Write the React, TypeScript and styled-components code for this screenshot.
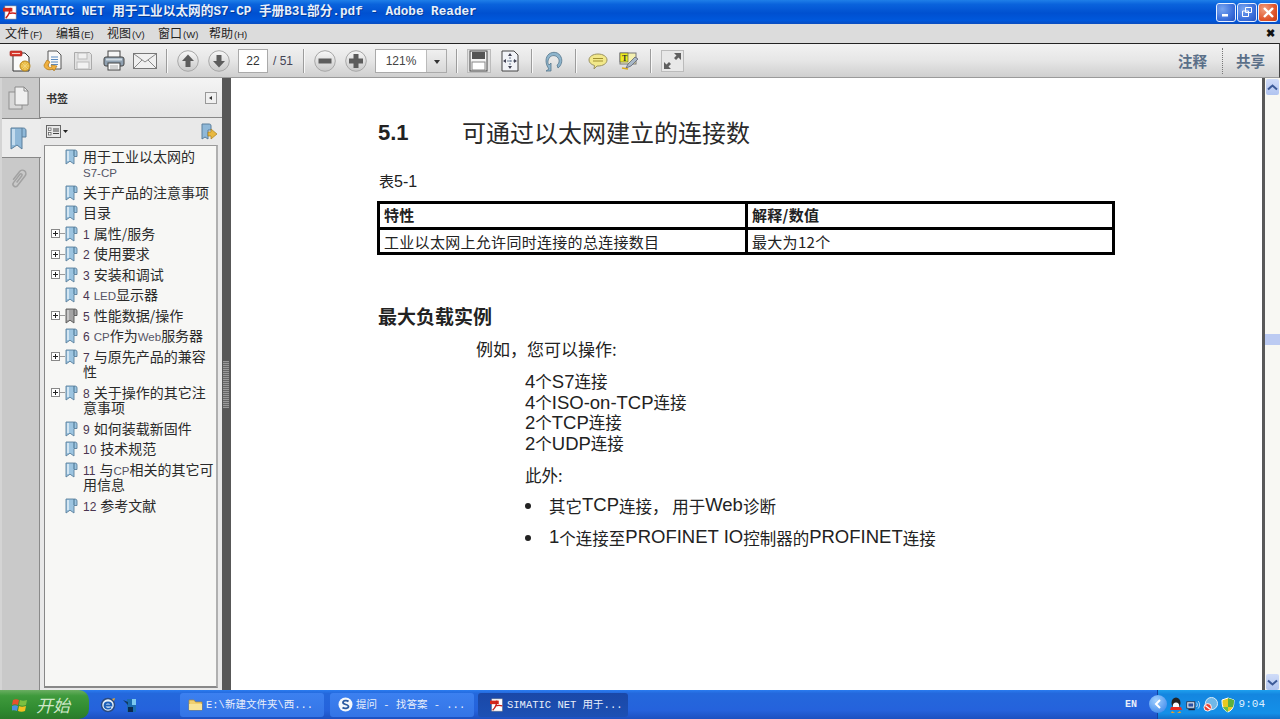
import React from "react";
import styled, { createGlobalStyle } from "styled-components";

const CJK = `"Noto Sans CJK SC", "Liberation Sans", sans-serif`;
const LAT = `"Liberation Sans", "Noto Sans CJK SC", sans-serif`;
const MONO = `"Liberation Mono", "Noto Sans CJK SC", monospace`;

const Global = createGlobalStyle`
  html, body { margin: 0; padding: 0; background: #fff; overflow: hidden; }
  * { box-sizing: border-box; }
`;

const Win = styled.div`
  width: 1280px; height: 719px; display: flex; flex-direction: column; overflow: hidden;
  font-family: ${CJK}; color: #222;
`;

/* ---------- title bar ---------- */
const TitleBar = styled.div`
  height: 24px; flex: none; display: flex; align-items: center; padding: 0 2px 0 3px;
  background: linear-gradient(180deg, #1f7fe8 0%, #0a63dc 18%, #0050d0 55%, #0058dc 85%, #0a4cc0 100%);
`;
const TitleText = styled.div`
  margin-left: 3px; color: #e8f0fa; font: 700 12.66px/24px ${MONO}; white-space: pre; flex: 1;
  text-shadow: 1px 1px 0 #003a9a;
`;
const WinBtn = styled.div<{ $c: "b" | "r" }>`
  width: 20px; height: 19px; margin-left: 1px; border: 1px solid #e8f0ff; border-radius: 3px;
  display: flex; align-items: center; justify-content: center;
  background: ${(p) =>
    p.$c === "r"
      ? "radial-gradient(circle at 30% 30%, #f0a080, #e0562c 60%, #c83c14)"
      : "radial-gradient(circle at 30% 30%, #7aa6f0, #3c70dc 60%, #2452c0)"};
`;

/* ---------- menu ---------- */
const MenuBar = styled.div`
  height: 19px; flex: none; display: flex; align-items: center; padding: 0 4px 0 5px; background: #dcdcdc;
`;
const MenuItem = styled.div`
  width: 51px; font: 400 12px/19px ${CJK}; color: #222; white-space: pre;
  & > i { font: 400 9.5px/19px ${LAT}; font-style: normal; margin-left: 1px; }
`;
const MenuClose = styled.div`
  margin-left: auto; font: 700 11px/19px ${LAT}; color: #111; margin-right: 1px;
`;

/* ---------- toolbar ---------- */
const ToolBar = styled.div`
  height: 35px; flex: none; display: flex; align-items: center; padding: 1px 13px 0 5px;
  border-top: 1px solid #222; border-right: 1px solid #444; border-bottom: 1px solid #9a9a9a;
  background: linear-gradient(180deg, #f2f2f2 0%, #e6e6e6 50%, #cfcfcf 100%);
`;
const ToolBtn = styled.div`
  width: 31px; height: 26px; flex: none; display: flex; align-items: center; justify-content: center;
`;
const Sep = styled.div<{ $l: number; $r: number }>`
  width: 1px; height: 24px; flex: none; background: #9c9c9c; box-shadow: 1px 0 0 #f8f8f8;
  margin: 0 ${(p) => p.$r}px 0 ${(p) => p.$l}px;
`;
const PageInput = styled.div`
  width: 30px; height: 24px; margin-left: 4px; flex: none; background: #fff; border: 1px solid #aaa;
  font: 400 12px/22px ${LAT}; text-align: center; color: #333;
`;
const PageTotal = styled.div`
  width: 22px; margin-left: 5px; flex: none; font: 400 12px/24px ${LAT}; color: #445; white-space: pre;
`;
const Combo = styled.div`
  width: 72px; height: 24px; margin-left: 4px; flex: none; display: flex; background: #fff; border: 1px solid #aaa;
`;
const ComboVal = styled.div`
  flex: 1; font: 400 12px/22px ${LAT}; text-align: center; color: #444;
`;
const ComboArrow = styled.div`
  width: 20px; background: linear-gradient(180deg, #f0f0f0, #d8d8d8); border-left: 1px solid #bbb;
  display: flex; align-items: center; justify-content: center;
  &::after { content: ""; border: 3px solid transparent; border-top: 4px solid #333; margin-top: 4px; }
`;
const RightLabel = styled.div`
  width: 30px; flex: none; font: 700 14.5px/34px ${CJK}; color: #5a6f88; white-space: nowrap;
`;
const DotSep = styled.div`
  height: 26px; width: 1px; flex: none; margin: 0 13px 0 14px; border-left: 1px dotted #777;
`;
const Spacer = styled.div` flex: 1; `;

/* ---------- body ---------- */
const Body = styled.div` flex: 1; min-height: 0; display: flex; `;
const Tabs = styled.div`
  width: 40px; flex: none; display: flex; flex-direction: column; background: #c9c9c9;
  border-right: 1px solid #8a8a8a; border-left: 2px solid #d4d4d4;
`;
const Tab = styled.div<{ $active?: boolean }>`
  height: 40px; width: ${(p) => (p.$active ? "39px" : "37px")}; display: flex; align-items: center; justify-content: center;
  padding-right: ${(p) => (p.$active ? "7px" : "3px")};
  position: relative;
  ${(p) => p.$active && "background:#ececec; border-top:1px solid #888; border-bottom:1px solid #888; z-index:1;"}
`;
const Panel = styled.div`
  width: 182px; flex: none; display: flex; flex-direction: column; background: #e9e9e9;
`;
const PanelHead = styled.div`
  height: 40px; flex: none; display: flex; align-items: center; justify-content: space-between; padding: 0 5px 0 6px;
  background: linear-gradient(180deg, #f4f4f4, #e4e4e4); border-bottom: 1px solid #888;
`;
const PanelTitle = styled.div` font: 700 11px/14px ${CJK}; color: #333; `;
const Collapse = styled.div`
  width: 12px; height: 12px; border: 1px solid #999; background: #f0f0f0;
  display: flex; align-items: center; justify-content: center;
  &::after { content: ""; border: 2px solid transparent; border-right: 3px solid #333; margin-left: -3px; }
`;
const PanelTools = styled.div`
  height: 27px; flex: none; display: flex; align-items: center; justify-content: space-between; padding: 0 4px 0 6px;
`;
const OptionsWrap = styled.div` display: flex; align-items: center; gap: 2px; `;
const Tree = styled.div`
  flex: 1; margin: 0 4px 2px 4px; border: 1px solid #9a9a9a; border-left-color: #888; background: #f7f7f5;
  border-bottom: 2px solid #888; border-right: 2px solid #b0b0b0;
`;
const Row = styled.div`
  position: relative; display: flex; padding: 2.5px 0 2.5px 20px; font: 400 14px/15.5px ${CJK}; color: #2a2a2a;
`;
const Mark = styled.div`
  width: 13px; height: 15px; flex: none; margin-right: 5px;
`;
const RowText = styled.div` flex: 1; min-width: 0; `;
const Num = styled.span`
  font: 400 12px/1 ${LAT}; color: #4a3550; margin-right: 4px;
`;
const Lat = styled.span` font: 400 11.5px/1 ${LAT}; color: #556; `;
const Expander = styled.div`
  position: absolute; left: 6px; top: 6px; width: 9px; height: 9px; border: 1px solid #888; background: #fff;
  &::before { content: ""; position: absolute; left: 1px; top: 3px; width: 5px; height: 1px; background: #222; }
  &::after { content: ""; position: absolute; left: 3px; top: 1px; width: 1px; height: 5px; background: #222; }
`;
const Dash = styled.div`
  position: absolute; left: 8px; top: 3px; width: 5px; height: 1px; background: #999;
`;
const Splitter = styled.div`
  width: 9px; flex: none; background: #585858; display: flex; align-items: center;
`;
const Grip = styled.div`
  width: 6px; height: 47px; margin-left: 1px;
  background: repeating-linear-gradient(0deg, #9a9a9a 0 1px, #666 1px 2px);
`;

/* ---------- page ---------- */
const Page = styled.div`
  flex: 1; background: #fff; padding: 39px 147px 0 147px; min-width: 0; color: #222;
`;
const H1 = styled.div` display: flex; height: 32px; align-items: center; `;
const H1Num = styled.div` width: 84px; font: 700 22px/32px ${LAT}; color: #222; `;
const H1Text = styled.div` font: 400 24px/32px ${CJK}; color: #2a2a2a; padding-bottom: 3px; `;
const Caption = styled.div`
  margin: 21px 0 0 1px; height: 22px; font: 400 15px/22px ${CJK};
`;
const CapNum = styled.span` font: 400 16px/20px ${LAT}; color: #222; `;
const PTable = styled.div`
  margin: 9px 0 0 -1px; width: 738px; border: 3px solid #000; display: grid; grid-template-columns: 368px 1fr;
`;
const Cell = styled.div<{ $h?: boolean; $last?: boolean }>`
  padding-left: 4px; white-space: pre;
  font: ${(p) => (p.$h ? 700 : 400)} 15px/${(p) => (p.$h ? 22 : 24)}px ${CJK}; letter-spacing: 0.3px; color: #222;
  height: ${(p) => (p.$h ? 26 : 22)}px;
  ${(p) => p.$h && "border-bottom: 3px solid #000;"}
  ${(p) => !p.$last && "border-right: 3px solid #000;"}
`;
const H2 = styled.div` margin-top: 47px; font: 700 19px/28px ${CJK}; color: #222; `;
const Intro = styled.div` margin: 6px 0 0 98px; font: 400 17px/26px ${CJK}; white-space: pre; `;
const Block = styled.div` margin: 9px 0 0 147px; `;
const Line = styled.div` font: 400 16.5px/20.6px ${CJK}; height: 20.6px; white-space: pre; `;
const L = styled.span` font: 400 18.5px/20px ${LAT}; color: #222; `;
const After = styled.div` margin: 11px 0 0 147px; font: 400 16.5px/22px ${CJK}; `;
const Bullet = styled.div<{ $top: number }>`
  margin: ${(p) => p.$top}px 0 0 147px; display: flex; font: 400 16.5px/22px ${CJK}; white-space: pre;
  &::before { content: ""; width: 6px; height: 6px; border-radius: 50%; background: #222; margin: 8px 18px 0 0; flex: none; }
`;

const ScrollBar = styled.div`
  width: 18px; flex: none; display: flex; flex-direction: column; background: #f8f8f3; border-left: 3px solid #585858;
`;
const ScrollBtn = styled.div`
  height: 16px; margin: 1px 1px 0 1px; background: linear-gradient(180deg, #d0dcf8, #b0c4f0); border-radius: 2px;
  display: flex; align-items: center; justify-content: center; flex: none;
`;
const Thumb = styled.div`
  height: 11px; margin: 239px 0 0 0; background: #bccbf2; flex: none;
`;

/* ---------- taskbar ---------- */
const TaskBar = styled.div`
  height: 29px; flex: none; display: flex; align-items: center;
  background: linear-gradient(180deg, #2a7cf0 0%, #2468dc 12%, #2562dc 70%, #1c50c0 100%);
`;
const Start = styled.div`
  width: 89px; height: 29px; flex: none; display: flex; align-items: center; padding-left: 12px; gap: 8px;
  border-radius: 0 10px 10px 0; background: linear-gradient(180deg, #6aae62 0%, #3f9a3c 20%, #2f8a30 70%, #2a7a2a 100%);
  font: italic 400 17px/29px ${CJK}; color: #cfe8c8;
`;
const Quick = styled.div` width: 91px; flex: none; display: flex; padding-left: 11px; gap: 7px; align-items: center; `;
const TaskBtn = styled.div<{ $w: number; $active?: boolean; $ml: number }>`
  width: ${(p) => p.$w}px; height: 24px; flex: none; margin-left: ${(p) => p.$ml}px; border-radius: 3px; display: flex; align-items: center;
  padding-left: ${(p) => (p.$active ? 12 : 8)}px; gap: 3px; color: #e8eefa; white-space: pre; overflow: hidden;
  font: 400 10.5px/24px ${MONO};
  background: ${(p) => (p.$active ? "linear-gradient(180deg,#1a48a8,#1c50b4)" : "linear-gradient(180deg,#3c80f0,#3474e6)")};
`;
const Tray = styled.div`
  width: 123px; height: 29px; flex: none; display: flex; align-items: center; position: relative; padding-left: 11px;
  border-left: 1px solid #1440a0; background: linear-gradient(180deg, #1fa0ee, #1486e0 15%, #1490e8 80%, #1270c8);
`;
const TrayIcon = styled.div<{ $ml: number }>`
  margin-left: ${(p) => p.$ml}px; flex: none; display: flex;
`;
const Lang = styled.div` margin-left: auto; margin-right: 20px; font: 700 10px/29px ${MONO}; color: #e8eefa; `;
const Chevron = styled.div`
  position: absolute; left: -9px; top: 5px; width: 18px; height: 18px; border-radius: 50%;
  background: radial-gradient(circle at 40% 30%, #a0d0ff, #2f7ee8); display: flex; align-items: center; justify-content: center;
`;
const Clock = styled.div` margin-left: auto; margin-right: 15px; font: 400 11px/29px ${MONO}; color: #dff0ff; `;

/* ---------- icons ---------- */
const PdfMark = ({ s = 15 }: { s?: number }) => (
  <svg width={s} height={s} viewBox="0 0 16 16">
    <rect x="2" y="1" width="12" height="14" fill="#fff" stroke="#888" strokeWidth=".6" />
    <rect x="0" y="3" width="10" height="4" fill="#d4281c" />
    <path d="M3 14c3-3 5-8 4.500-11M6 9c2-.5 5-1 8 0" stroke="#c8201c" strokeWidth="1.600" fill="none" />
  </svg>
);
const Create = () => (
  <svg width="24" height="24" viewBox="0 0 24 24">
    <path d="M4 4h12l4 4v14H4z" fill="#fafafa" stroke="#333" />
    <rect x="1" y="2" width="12" height="5" rx="1" fill="#d83a30" stroke="#a01c16" strokeWidth=".6" />
    <rect x="3" y="4" width="8" height="1" fill="#f8d0c8" />
    <circle cx="16" cy="17" r="5" fill="#e8b840" stroke="#b88820" />
    <path d="M16 13v8M12 17h8M13 14l6 6M19 14l-6 6" stroke="#f4d880" strokeWidth=".8" />
  </svg>
);
const Open = () => (
  <svg width="24" height="24" viewBox="0 0 24 24">
    <path d="M8 2h9l4 4v14H8z" fill="#f8f8f8" stroke="#555" />
    <path d="M11 8h7M11 10.500h7M11 13h7M11 15.500h7" stroke="#5a8ac0" />
    <path d="M4 16c0 4 5 6 9 4l1 2 3-5-6-1 1 2c-2 1-4 0-4-2l2-3-3-2-3 5z" fill="#f0b040" stroke="#b07818" strokeWidth=".7" />
  </svg>
);
const Save = () => (
  <svg width="20" height="20" viewBox="0 0 20 20">
    <path d="M1.500 1.500h15l2 2v15h-17z" fill="#e2e2e2" stroke="#aaa" />
    <rect x="5" y="2" width="9" height="6" fill="#f0f0f0" stroke="#bbb" />
    <rect x="4" y="11" width="12" height="7" fill="#f2f2f2" stroke="#bbb" />
  </svg>
);
const Print = () => (
  <svg width="24" height="24" viewBox="0 0 24 24">
    <rect x="6" y="2" width="12" height="7" fill="#f6f6f6" stroke="#444" />
    <rect x="2" y="8" width="20" height="9" rx="2" fill="#8fa0b0" stroke="#444" />
    <rect x="4" y="9.500" width="16" height="2" fill="#d0dae2" />
    <rect x="6" y="14" width="12" height="7" fill="#fafafa" stroke="#444" />
    <path d="M8 17h8M8 19h8" stroke="#aaa" />
  </svg>
);
const Mail = () => (
  <svg width="24" height="18" viewBox="0 0 24 18">
    <rect x=".5" y="1.500" width="23" height="15" fill="#f0f0f0" stroke="#777" />
    <path d="M1 2l11 8 11-8M1 16l8-8M23 16l-8-8" fill="none" stroke="#888" />
  </svg>
);
const Circ = ({ d }: { d: string }) => (
  <svg width="22" height="22" viewBox="0 0 22 22">
    <defs>
      <linearGradient id="cg" x1="0" y1="0" x2="0" y2="1">
        <stop offset="0" stopColor="#f8f8f8" />
        <stop offset="1" stopColor="#c8c8c8" />
      </linearGradient>
    </defs>
    <circle cx="11" cy="11" r="10.300" fill="url(#cg)" stroke="#a8a8a8" />
    <path d={d} fill="#5c5c5c" />
  </svg>
);
const FitPage = () => (
  <svg width="24" height="24" viewBox="0 0 24 24">
    <rect x=".5" y=".5" width="23" height="23" fill="#e0e0e0" stroke="#bbb" />
    <rect x="3" y="2" width="17" height="20" fill="#f4f4f4" stroke="#444" />
    <rect x="5" y="3" width="13" height="7" fill="#555" />
    <rect x="5" y="13" width="13" height="8" fill="#fff" stroke="#888" />
  </svg>
);
const FitWide = () => (
  <svg width="18" height="22" viewBox="0 0 18 22">
    <path d="M1 1h12l4 4v16H1z" fill="#f2f4f8" stroke="#444" />
    <path d="M9 4v14M3 11h12" stroke="#6a7a90" strokeDasharray="2 1" />
    <path d="M9 3l-2 3h4zM9 19l-2-3h4zM2 11l3-2v4zM16 11l-3-2v4z" fill="#445" />
  </svg>
);
const Spin = () => (
  <svg width="20" height="22" viewBox="0 0 20 22">
    <path d="M5 19C1 14 1 7 5 4c4-3 10-2 12 3 2 4 0 9-3 11l-1-3c2-1 3-5 1-7-2-3-6-3-8-1-2 2-3 6-1 8l2-2v8H2z" fill="#8db4cc" stroke="#56768c" strokeWidth=".8" />
  </svg>
);
const Comment = () => (
  <svg width="20" height="20" viewBox="0 0 20 20">
    <path d="M10 3c5 0 9 2.500 9 6s-4 6-9 6l-1 0-3 3 .5-3.500C3 13.500 1 11.500 1 9c0-3.500 4-6 9-6z" fill="#f2e88a" stroke="#9a9260" />
    <path d="M5 7.500h10M5 10h10" stroke="#a09030" />
  </svg>
);
const Highlight = () => (
  <svg width="20" height="20" viewBox="0 0 20 20">
    <rect x="1" y="2" width="16" height="11" fill="#f4f0b0" stroke="#777" />
    <rect x="1" y="2" width="8" height="9" fill="#ecec20" stroke="#555" strokeWidth=".6" />
    <text x="3" y="9.500" fontSize="8" fontFamily="Liberation Serif" fontWeight="700" fill="#333">T</text>
    <path d="M7 17l2-4 7-7 3 2-7 7z" fill="#a8b8c8" stroke="#556" strokeWidth=".7" />
    <path d="M3 17l6 1" stroke="#d8a820" strokeWidth="1.500" />
  </svg>
);
const Expand = () => (
  <svg width="23" height="22" viewBox="0 0 23 22">
    <rect x=".5" y=".5" width="22" height="21" fill="#e8e8e8" stroke="#bbb" />
    <path d="M13 3h7v7l-2.500-2.500-2.500 2.500-2-2 2.500-2.500zM10 19H3v-7l2.500 2.500L8 12l2 2-2.500 2.500z" fill="#606060" />
  </svg>
);
const DocTab = () => (
  <svg width="22" height="24" viewBox="0 0 22 24">
    <rect x="1" y="6" width="13" height="17" fill="#d8d8d8" stroke="#909090" />
    <path d="M7 1h9l4 4v14H7z" fill="#f0f0f0" stroke="#8a8a8a" />
    <path d="M16 1v4h4" fill="none" stroke="#8a8a8a" />
  </svg>
);
const BookTab = () => (
  <svg width="19" height="24" viewBox="0 0 19 24">
    <path d="M2 2h11c2 0 4 0 4 3v6h-4v12l-5-4-6 4V4z" fill="#8fb8d8" stroke="#5a7f9c" />
    <path d="M13 2v9" stroke="#5a7f9c" />
    <rect x="3" y="3" width="3" height="16" fill="#c4dcee" />
  </svg>
);
const ClipTab = () => (
  <svg width="22" height="24" viewBox="0 0 22 24">
    <g transform="rotate(38 11 12)">
      <path d="M7.500 17V6.500a3.500 3.500 0 0 1 7 0V19a2.500 2.500 0 0 1-5 0V8.500a1.200 1.200 0 0 1 2.400 0V17" fill="none" stroke="#a2a2a2" strokeWidth="1.500" />
    </g>
  </svg>
);
const OptIcon = () => (
  <svg width="15" height="13" viewBox="0 0 15 13">
    <rect x=".5" y=".5" width="14" height="12" fill="#e8e8e8" stroke="#666" />
    <rect x="2.500" y="3" width="2.500" height="2.500" fill="#fff" stroke="#555" strokeWidth=".7" />
    <rect x="2.500" y="7.500" width="2.500" height="2.500" fill="#fff" stroke="#555" strokeWidth=".7" />
    <path d="M7 4h6M7 6h6M7 8.500h6" stroke="#444" />
  </svg>
);
const Caret = () => (
  <svg width="5" height="4" viewBox="0 0 5 4"><path d="M0 0h5L2.500 3z" fill="#222" /></svg>
);
const NewMark = () => (
  <svg width="17" height="17" viewBox="0 0 17 17">
    <path d="M1 1h6c2 0 3 0 3 2v4H7v9l-3-2-3 2z" fill="#8fb8d8" stroke="#5a7f9c" />
    <path d="M7 9h3V6l6 5-6 5v-3H7z" fill="#e8b840" stroke="#a87f20" strokeWidth=".7" />
  </svg>
);
const BookMark = ({ gray }: { gray?: boolean }) => (
  <svg width="13" height="16" viewBox="0 0 13 16">
    <path d="M1 1h7.500c2 0 3.500 0 3.500 2v4.500H9V15l-4-2.800L1 15z" fill={gray ? "#a4a4a4" : "#9cc4e0"} stroke={gray ? "#555" : "#5a7f9c"} strokeWidth=".9" />
    <path d="M9 1v6" stroke={gray ? "#555" : "#44708c"} />
    <rect x="2" y="2" width="2" height="10" fill={gray ? "#c8c8c8" : "#d4e6f2"} />
  </svg>
);
const Chev = ({ down }: { down?: boolean }) => (
  <svg width="11" height="7" viewBox="0 0 11 7">
    <path d={down ? "M1 1.500l4.500 4 4.500-4" : "M1 5.500l4.500-4 4.500 4"} fill="none" stroke="#3c5a98" strokeWidth="2" />
  </svg>
);
const XpFlag = () => (
  <svg width="16" height="16" viewBox="0 0 16 16">
    <path d="M1 3c2-1 4-1 6 0l-1 5c-2-1-4-1-6 0z" fill="#e8502c" />
    <path d="M8 3c2 1 4 1 7 0l-1 5c-2 1-5 1-7 0z" fill="#7cc040" />
    <path d="M0 9c2-1 4-1 6 0l-1 5c-2-1-4-1-6 0z" fill="#4a90e0" />
    <path d="M7 9c2 1 4 1 7 0l-1 5c-2 1-5 1-7 0z" fill="#f4c020" />
  </svg>
);
const IE = () => (
  <svg width="16" height="16" viewBox="0 0 16 16">
    <circle cx="8" cy="8" r="6.500" fill="#e8f2fa" stroke="#2a4a80" strokeWidth="1.500" />
    <path d="M4.500 8.500h7c0-4-7-4-7 0 0 3.500 5 4 6.500 2" fill="none" stroke="#1c60b8" strokeWidth="1.800" />
    <path d="M12 2l3-1-1 3z" fill="#e8a830" />
  </svg>
);
const Desk = () => (
  <svg width="16" height="16" viewBox="0 0 16 16">
    <path d="M4 2h9v13H4z" fill="#1c6cb0" />
    <path d="M9 2h4v6H9z" fill="#7cc8f0" />
    <path d="M0 3l5 2v3z" fill="#103a60" />
    <rect x="5" y="10" width="5" height="5" fill="#0a2a50" />
  </svg>
);
const Folder = () => (
  <svg width="15" height="13" viewBox="0 0 15 13">
    <path d="M1 2h5l1.500 2H14v8H1z" fill="#f0d070" stroke="#b08a30" strokeWidth=".7" />
    <path d="M1 6h13v6H1z" fill="#f8e498" />
  </svg>
);
const Sogou = () => (
  <svg width="15" height="15" viewBox="0 0 15 15">
    <circle cx="7.500" cy="7.500" r="7" fill="#f4f8fc" />
    <path d="M10.500 4.500C9 3 5 3.500 5 5.500 5 8 10.500 7 10.500 9.500c0 2-4 2.500-6 1" fill="none" stroke="#2a5aa0" strokeWidth="1.800" />
  </svg>
);
const QQ = () => (
  <svg width="14" height="16" viewBox="0 0 14 16">
    <ellipse cx="7" cy="6" rx="4.500" ry="5.500" fill="#222" />
    <ellipse cx="7" cy="9" rx="3.200" ry="3.500" fill="#fafafa" />
    <path d="M2 10h10l1 3H1z" fill="#e82c20" />
    <path d="M3 14l3 2H2zM11 14l-3 2h4z" fill="#f0a020" />
  </svg>
);
const Net = () => (
  <svg width="16" height="14" viewBox="0 0 20 14">
    <rect x="1" y="3" width="10" height="8" fill="#dfeaf8" stroke="#223" />
    <rect x="3" y="5" width="6" height="4" fill="#2a50a0" />
    <rect x="3" y="12" width="8" height="1.500" fill="#223" />
    <path d="M13 4c1.500 1.500 1.500 4 0 5.500M15 2c2.500 2.500 2.500 7 0 9.500" fill="none" stroke="#e8f0fa" />
  </svg>
);
const Globe = () => (
  <svg width="15" height="15" viewBox="0 0 16 16">
    <circle cx="9" cy="7" r="6.500" fill="#70b8e8" stroke="#e4f0f8" />
    <circle cx="5" cy="11" r="4" fill="#e84030" stroke="#fff" />
    <path d="M2.500 9l5 4" stroke="#fff" strokeWidth="1.400" />
  </svg>
);
const Shield = () => (
  <svg width="14" height="16" viewBox="0 0 14 16">
    <path d="M7 1l6 2c0 6-1 10-6 12C2 13 1 9 1 3z" fill="#e8c820" stroke="#fff" />
    <path d="M7 1l6 2c0 3-.3 5-1 7H7z" fill="#5cb040" />
    <path d="M7 10h-5c1 2.500 3 4 5 5z" fill="#6cbe48" />
  </svg>
);

const UP = "M11 4.500L5 11h3.500v6h5v-6H17z";
const DOWN = "M11 17.500L5 11h3.500V5h5v6H17z";
const MINUS = "M4.500 8.500h13v5h-13z";
const PLUS = "M8.500 4h5v4.500H18v5h-4.500V18h-5v-4.500H4v-5h4.500z";

const menus: [string, string][] = [["文件", "(F)"], ["编辑", "(E)"], ["视图", "(V)"], ["窗口", "(W)"], ["帮助", "(H)"]];

type Item = { n?: string; t: React.ReactNode; exp?: boolean; gray?: boolean };
const items: Item[] = [
  { t: <>用于工业以太网的<br /><Lat>S7-CP</Lat></> },
  { t: "关于产品的注意事项" },
  { t: "目录" },
  { n: "1", t: "属性/服务", exp: true },
  { n: "2", t: "使用要求", exp: true },
  { n: "3", t: "安装和调试", exp: true },
  { n: "4", t: <><Lat>LED</Lat>显示器</> },
  { n: "5", t: "性能数据/操作", exp: true, gray: true },
  { n: "6", t: <><Lat>CP</Lat>作为<Lat>Web</Lat>服务器</> },
  { n: "7", t: "与原先产品的兼容性", exp: true },
  { n: "8", t: "关于操作的其它注意事项", exp: true },
  { n: "9", t: "如何装载新固件" },
  { n: "10", t: "技术规范" },
  { n: "11", t: <>与<Lat>CP</Lat>相关的其它可用信息</> },
  { n: "12", t: "参考文献" },
];

export default function App() {
  return (
    <Win>
      <Global />
      <TitleBar>
        <PdfMark />
        <TitleText>SIMATIC NET 用于工业以太网的S7-CP 手册B3L部分.pdf - Adobe Reader</TitleText>
        <WinBtn $c="b">
          <svg width="12" height="12" viewBox="0 0 12 12"><rect x="2" y="8" width="6" height="2.500" fill="#fff" /></svg>
        </WinBtn>
        <WinBtn $c="b">
          <svg width="12" height="12" viewBox="0 0 12 12"><path d="M4.500 1.500h6v5h-6zM1.500 5h6v5.500h-6z" fill="none" stroke="#fff" /></svg>
        </WinBtn>
        <WinBtn $c="r">
          <svg width="13" height="13" viewBox="0 0 13 13"><path d="M2 2l9 9M11 2l-9 9" stroke="#fff" strokeWidth="2.400" /></svg>
        </WinBtn>
      </TitleBar>
      <MenuBar>
        {menus.map(([a, b]) => (
          <MenuItem key={a}>{a}<i>{b}</i></MenuItem>
        ))}
        <MenuClose>✖</MenuClose>
      </MenuBar>
      <ToolBar>
        <ToolBtn><Create /></ToolBtn>
        <ToolBtn><Open /></ToolBtn>
        <ToolBtn><Save /></ToolBtn>
        <ToolBtn><Print /></ToolBtn>
        <ToolBtn><Mail /></ToolBtn>
        <Sep $l={6} $r={5} />
        <ToolBtn><Circ d={UP} /></ToolBtn>
        <ToolBtn><Circ d={DOWN} /></ToolBtn>
        <PageInput>22</PageInput>
        <PageTotal>/ 51</PageTotal>
        <Sep $l={8} $r={5} />
        <ToolBtn><Circ d={MINUS} /></ToolBtn>
        <ToolBtn><Circ d={PLUS} /></ToolBtn>
        <Combo><ComboVal>121%</ComboVal><ComboArrow /></Combo>
        <Sep $l={9} $r={6} />
        <ToolBtn><FitPage /></ToolBtn>
        <ToolBtn><FitWide /></ToolBtn>
        <Sep $l={6} $r={6} />
        <ToolBtn><Spin /></ToolBtn>
        <Sep $l={6} $r={6} />
        <ToolBtn><Comment /></ToolBtn>
        <ToolBtn><Highlight /></ToolBtn>
        <Sep $l={6} $r={6} />
        <ToolBtn><Expand /></ToolBtn>
        <Spacer />
        <RightLabel>注释</RightLabel>
        <DotSep />
        <RightLabel>共享</RightLabel>
      </ToolBar>
      <Body>
        <Tabs>
          <Tab><DocTab /></Tab>
          <Tab $active><BookTab /></Tab>
          <Tab><ClipTab /></Tab>
        </Tabs>
        <Panel>
          <PanelHead>
            <PanelTitle>书签</PanelTitle>
            <Collapse />
          </PanelHead>
          <PanelTools>
            <OptionsWrap><OptIcon /><Caret /></OptionsWrap>
            <NewMark />
          </PanelTools>
          <Tree>
            {items.map((it, i) => (
              <Row key={i}>
                {it.exp && <Expander><Dash /></Expander>}
                <Mark><BookMark gray={it.gray} /></Mark>
                <RowText>{it.n && <Num>{it.n}</Num>}{it.t}</RowText>
              </Row>
            ))}
          </Tree>
        </Panel>
        <Splitter><Grip /></Splitter>
        <Page>
          <H1>
            <H1Num>5.1</H1Num>
            <H1Text>可通过以太网建立的连接数</H1Text>
          </H1>
          <Caption>表<CapNum>5-1</CapNum></Caption>
          <PTable>
            <Cell $h>特性</Cell>
            <Cell $h $last>解释/数值</Cell>
            <Cell>工业以太网上允许同时连接的总连接数目</Cell>
            <Cell $last>最大为12个</Cell>
          </PTable>
          <H2>最大负载实例</H2>
          <Intro>例如，您可以操作:</Intro>
          <Block>
            <Line><L>4</L>个<L>S7</L>连接</Line>
            <Line><L>4</L>个<L>ISO-on-TCP</L>连接</Line>
            <Line><L>2</L>个<L>TCP</L>连接</Line>
            <Line><L>2</L>个<L>UDP</L>连接</Line>
          </Block>
          <After>此外:</After>
          <Bullet $top={9}>其它<L>TCP</L>连接， 用于<L>Web</L>诊断</Bullet>
          <Bullet $top={10}><L>1</L>个连接至<L>PROFINET IO</L>控制器的<L>PROFINET</L>连接</Bullet>
        </Page>
        <ScrollBar>
          <ScrollBtn><Chev /></ScrollBtn>
          <Thumb />
          <Spacer />
          <ScrollBtn><Chev down /></ScrollBtn>
        </ScrollBar>
      </Body>
      <TaskBar>
        <Start><XpFlag />开始</Start>
        <Quick><IE /><Desk /></Quick>
        <TaskBtn $w={144} $ml={0}><Folder />E:\新建文件夹\西...</TaskBtn>
        <TaskBtn $w={144} $ml={6}><Sogou />提问 - 找答案 - ...</TaskBtn>
        <TaskBtn $w={150} $ml={4} $active><PdfMark s={14} />SIMATIC NET 用于...</TaskBtn>
        <Lang>EN</Lang>
        <Tray>
          <Chevron>
            <svg width="8" height="10" viewBox="0 0 8 10"><path d="M6 1L2 5l4 4" fill="none" stroke="#fff" strokeWidth="2" /></svg>
          </Chevron>
          <TrayIcon $ml={0}><QQ /></TrayIcon>
          <TrayIcon $ml={3}><Net /></TrayIcon>
          <TrayIcon $ml={1}><Globe /></TrayIcon>
          <TrayIcon $ml={3}><Shield /></TrayIcon>
          <Clock>9:04</Clock>
        </Tray>
      </TaskBar>
    </Win>
  );
}
